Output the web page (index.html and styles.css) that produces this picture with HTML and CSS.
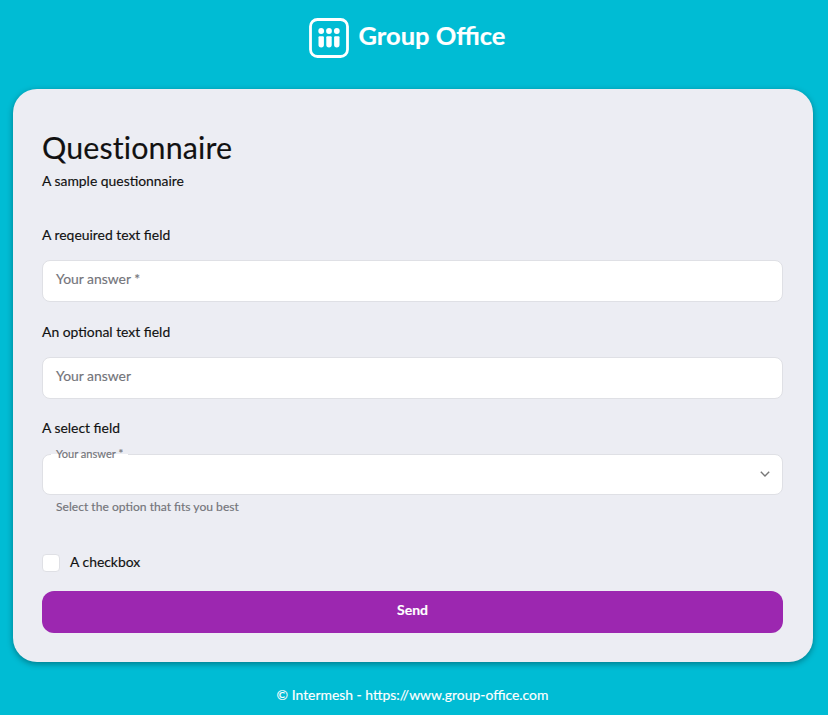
FILE: index.html
```html
<!DOCTYPE html>
<html>
<head>
  <title>Questionnaire</title>
  <link rel="stylesheet" href="styles.css">
</head>
<body>
  <div class="header">
    <svg class="logo" width="40" height="40" viewBox="0 0 40 40">
      <rect x="1.5" y="1.5" width="37" height="37" rx="7" fill="none" stroke="#fff" stroke-width="2.8"/>
      <circle cx="12.2" cy="13" r="2.9" fill="#fff"/>
      <circle cx="20" cy="13" r="2.9" fill="#fff"/>
      <circle cx="27.8" cy="13" r="2.9" fill="#fff"/>
      <path d="M9.5 19.2a1 1 0 0 1 1-1h3.4a1 1 0 0 1 1 1v7.6a2.7 2.7 0 0 1-5.4 0z" fill="#fff"/>
      <path d="M17.3 19.2a1 1 0 0 1 1-1h3.4a1 1 0 0 1 1 1v7.6a2.7 2.7 0 0 1-5.4 0z" fill="#fff"/>
      <path d="M25.1 19.2a1 1 0 0 1 1-1h3.4a1 1 0 0 1 1 1v7.6a2.7 2.7 0 0 1-5.4 0z" fill="#fff"/>
    </svg>
    <span class="brand">Group Office</span>
  </div>

  <form class="card">
    <h1>Questionnaire</h1>
    <p class="intro">A sample questionnaire</p>

    <label class="question first">A reqeuired text field</label>
    <div class="field">Your answer *</div>

    <label class="question">An optional text field</label>
    <div class="field">Your answer</div>

    <label class="question select-question">A select field</label>
    <div class="field select">
      <span class="float-label">Your answer *</span>
      <svg class="chevron" width="10" height="6" viewBox="0 0 10 6">
        <path d="M.8.8 5 5l4.2-4.2" fill="none" stroke="#777" stroke-width="1.4"/>
      </svg>
    </div>
    <div class="hint">Select the option that fits you best</div>

    <div class="check-row">
      <span class="checkbox"></span>
      <span class="check-text">A checkbox</span>
    </div>

    <button class="send" type="button">Send</button>
  </form>

  <div class="footer">© Intermesh - https://www.group-office.com</div>
</body>
</html>
```

FILE: styles.css
```css
body {
  margin: 0;
  background: #00bcd4;
  font-family: Lato, sans-serif;
  font-size: 13.9px;
  color: #111;
  -webkit-text-stroke: 0.15px;
}

.header {
  height: 89px;
  display: flex;
  align-items: flex-start;
  justify-content: center;
  gap: 10px;
  padding: 18px 14px 0 0;
  box-sizing: border-box;
}

.brand {
  color: #fff;
  font-size: 25.5px;
  font-weight: 700;
  line-height: 34px;
}

.card {
  margin: 0 15px 0 13px;
  height: 573px;
  box-sizing: border-box;
  padding: 40px 30px 0 29px;
  background: #ecedf3;
  border-radius: 24px;
  box-shadow: 0 2px 6px rgba(0, 0, 0, 0.35);
}

h1 {
  margin: 0;
  font-size: 30.4px;
  font-weight: 400;
  line-height: 36px;
  letter-spacing: 0.13px;
}

.intro {
  margin: 6px 0 0;
  line-height: 20px;
}

.question {
  display: block;
  line-height: 20px;
  margin: 20px 0 15px;
}

.question.first {
  margin-top: 34px;
}

.question.select-question {
  margin: 19px 0 16px;
}

.field {
  height: 42px;
  box-sizing: border-box;
  padding: 0 13px;
  background: #fff;
  border: 1px solid #dfe0e5;
  border-radius: 8px;
  color: #73747a;
  line-height: 36px;
}

.select {
  position: relative;
  height: 41px;
}

.float-label {
  position: absolute;
  left: 8px;
  top: -8px;
  padding: 0 5px;
  font-size: 11.1px;
  line-height: 14px;
  background: linear-gradient(#ecedf3 50%, #fff 50%);
}

.chevron {
  position: absolute;
  right: 12px;
  top: 16px;
}

.hint {
  margin: 4px 0 0 14px;
  font-size: 12.1px;
  line-height: 16px;
  color: #73747a;
}

.check-row {
  display: flex;
  align-items: center;
  gap: 10px;
  margin-top: 39px;
  height: 18px;
}

.checkbox {
  width: 18px;
  height: 18px;
  box-sizing: border-box;
  background: #fff;
  border: 1px solid #dfe0e5;
  border-radius: 4px;
}

.check-text {
  line-height: 16px;
  margin-bottom: 2px;
}

.send {
  display: block;
  width: 100%;
  height: 42px;
  margin-top: 19px;
  padding: 0 0 6px;
  border: none;
  border-radius: 12px;
  background: #9c27b0;
  color: #fff;
  font-family: inherit;
  font-size: 14px;
  font-weight: 700;
}

.footer {
  margin-top: 24px;
  padding-right: 3px;
  text-align: center;
  color: #fff;
  line-height: 18px;
}
```
